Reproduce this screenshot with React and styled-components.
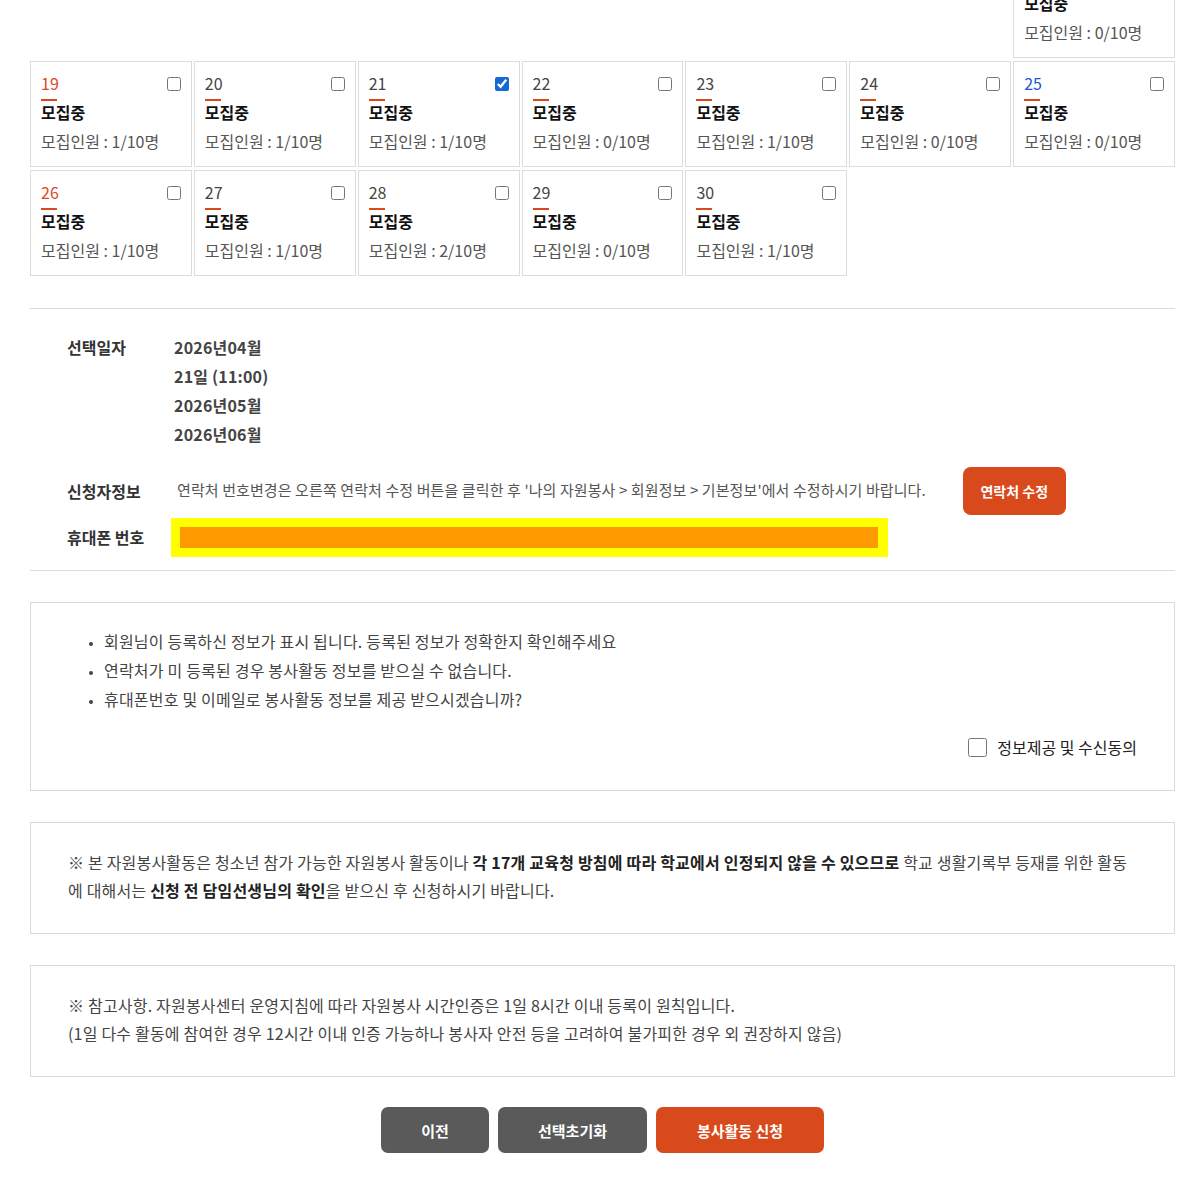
import styled, { createGlobalStyle } from "styled-components";

const GlobalStyle = createGlobalStyle`
  body {
    margin: 0;
    background: #fff;
    font-family: "Noto Sans CJK KR", "Noto Sans", sans-serif;
    color: #333;
  }
`;

const days = [
  null, null, null, null, null, null,
  { day: 18, count: 0, tone: "sat" },
  { day: 19, count: 1, tone: "sun" },
  { day: 20, count: 1 },
  { day: 21, count: 1, checked: true },
  { day: 22, count: 0 },
  { day: 23, count: 1 },
  { day: 24, count: 0 },
  { day: 25, count: 0, tone: "sat" },
  { day: 26, count: 1, tone: "sun" },
  { day: 27, count: 1 },
  { day: 28, count: 2 },
  { day: 29, count: 0 },
  { day: 30, count: 1 },
  null, null,
];

const App = () => {
  return (
    <Page>
      <GlobalStyle />
      <Calendar>
        {days.map((d, i) =>
          d ? (
            <Cell key={i}>
              <CellHead>
                <DayNum $tone={d.tone}>{d.day}</DayNum>
                <CellCheck type="checkbox" defaultChecked={!!d.checked} />
              </CellHead>
              <Bar />
              <Status>모집중</Status>
              <Count>모집인원 : {d.count}/10명</Count>
            </Cell>
          ) : (
            <Blank key={i} />
          )
        )}
      </Calendar>

      <Divider />

      <InfoSection>
        <InfoRow>
          <Label>선택일자</Label>
          <Dates>
            <div>2026년04월</div>
            <div>21일 (11:00)</div>
            <div>2026년05월</div>
            <div>2026년06월</div>
          </Dates>
        </InfoRow>
        <InfoRow $center $top={18}>
          <Label>신청자정보</Label>
          <Guide>
            연락처 번호변경은 오른쪽 연락처 수정 버튼을 클릭한 후 '나의 자원봉사 &gt; 회원정보 &gt; 기본정보'에서 수정하시기 바랍니다.
          </Guide>
          <EditButton>연락처 수정</EditButton>
        </InfoRow>
        <InfoRow $center $top={3}>
          <Label>휴대폰 번호</Label>
          <PhoneField />
        </InfoRow>
      </InfoSection>

      <Divider $top={13} />

      <NoticeBox $pad="24px 37px 32px">
        <BulletList>
          <li>회원님이 등록하신 정보가 표시 됩니다. 등록된 정보가 정확한지 확인해주세요</li>
          <li>연락처가 미 등록된 경우 봉사활동 정보를 받으실 수 없습니다.</li>
          <li>휴대폰번호 및 이메일로 봉사활동 정보를 제공 받으시겠습니까?</li>
        </BulletList>
        <AgreeRow>
          <AgreeCheck type="checkbox" />
          정보제공 및 수신동의
        </AgreeRow>
      </NoticeBox>

      <NoticeBox>
        <NoticeText>
          ※ 본 자원봉사활동은 청소년 참가 가능한 자원봉사 활동이나 <b>각 17개 교육청 방침에 따라 학교에서 인정되지 않을 수 있으므로</b> 학교 생활기록부 등재를 위한 활동에 대해서는 <b>신청 전 담임선생님의 확인</b>을 받으신 후 신청하시기 바랍니다.
        </NoticeText>
      </NoticeBox>

      <NoticeBox>
        <NoticeText>
          ※ 참고사항. 자원봉사센터 운영지침에 따라 자원봉사 시간인증은 1일 8시간 이내 등록이 원칙입니다.
          <br />
          (1일 다수 활동에 참여한 경우 12시간 이내 인증 가능하나 봉사자 안전 등을 고려하여 불가피한 경우 외 권장하지 않음)
        </NoticeText>
      </NoticeBox>

      <ButtonBar>
        <ActionButton $w={108}>이전</ActionButton>
        <ActionButton $w={149}>선택초기화</ActionButton>
        <ActionButton $w={168} $primary>봉사활동 신청</ActionButton>
      </ButtonBar>
    </Page>
  );
};

const Page = styled.div`
  width: 1145px;
  margin-left: 30px;
  padding-bottom: 40px;
`;

const Calendar = styled.div`
  display: grid;
  grid-template-columns: repeat(7, 1fr);
  grid-auto-rows: 106px;
  column-gap: 2px;
  row-gap: 3px;
  margin-top: -48px;
`;

const Cell = styled.div`
  border: 1px solid #dcdcdc;
  padding: 10px 10px 0 10px;
  display: flex;
  flex-direction: column;
  align-items: flex-start;
`;

const Blank = styled.div``;

const CellHead = styled.div`
  width: 100%;
  display: flex;
  justify-content: space-between;
  align-items: center;
  height: 22px;
`;

const DayNum = styled.span`
  font-size: 16px;
  line-height: 22px;
  color: ${(p) =>
    p.$tone === "sun" ? "#e0461c" : p.$tone === "sat" ? "#1a56d6" : "#444"};
`;

const CellCheck = styled.input`
  width: 14px;
  height: 14px;
  margin: 2px 0 0 0;
  accent-color: #1668d4;
`;

const Bar = styled.div`
  width: 16px;
  height: 2px;
  margin-top: 5px;
  background: #d84a1b;
`;

const Status = styled.div`
  font-size: 16px;
  font-weight: 700;
  line-height: 22px;
  color: #111;
`;

const Count = styled.div`
  margin-top: 7px;
  font-size: 16px;
  line-height: 22px;
  color: #555;
`;

const Divider = styled.hr`
  border: 0;
  border-top: 1px solid #dcdcdc;
  margin: ${(p) => (p.$top ?? 32)}px 0 0 0;
`;

const InfoSection = styled.div`
  padding: 24px 0 0 37px;
`;

const InfoRow = styled.div`
  display: flex;
  align-items: ${(p) => (p.$center ? "center" : "flex-start")};
  margin-top: ${(p) => p.$top ?? 0}px;
`;

const Label = styled.div`
  width: 107px;
  flex-shrink: 0;
  font-size: 16px;
  font-weight: 700;
  line-height: 29px;
  color: #333;
`;

const Dates = styled.div`
  font-size: 16px;
  font-weight: 700;
  line-height: 29px;
  letter-spacing: 0.2px;
  color: #444;
`;

const Guide = styled.div`
  margin: -3px 0 0 3px;
  font-size: 15px;
  letter-spacing: 0.1px;
  color: #555;
  white-space: nowrap;
`;

const EditButton = styled.button`
  margin-left: 37px;
  width: 103px;
  height: 48px;
  border: 0;
  border-radius: 8px;
  background: #d84a1b;
  color: #fff;
  font-family: inherit;
  font-size: 14px;
  font-weight: 700;
`;

const PhoneField = styled.div`
  margin-left: -3px;
  width: 698px;
  height: 21px;
  border: 9px solid #ffff00;
  border-right-width: 10px;
  background: #ff9900;
`;

const NoticeBox = styled.div`
  margin-top: 31px;
  border: 1px solid #d9d9d9;
  padding: ${(p) => p.$pad ?? "25px 37px 29px"};
`;

const BulletList = styled.ul`
  margin: 0;
  padding-left: 36px;
  font-size: 16px;
  line-height: 29px;
  letter-spacing: 0.2px;
  color: #444;

  li::marker {
    font-size: 11px;
  }
`;

const AgreeRow = styled.label`
  margin-top: 22px;
  display: flex;
  justify-content: flex-end;
  align-items: center;
  gap: 10px;
  font-size: 16px;
  line-height: 22px;
  color: #222;
`;

const AgreeCheck = styled.input`
  width: 19px;
  height: 19px;
  margin: 0;
`;

const NoticeText = styled.p`
  margin: 0;
  font-size: 16px;
  line-height: 28px;
  letter-spacing: 0.2px;
  color: #444;

  b {
    color: #222;
  }
`;

const ButtonBar = styled.div`
  margin-top: 30px;
  display: flex;
  justify-content: center;
  gap: 9px;
`;

const ActionButton = styled.button`
  width: ${(p) => p.$w}px;
  height: 46px;
  border: 0;
  border-radius: 7px;
  background: ${(p) => (p.$primary ? "#d84a1b" : "#5a5a5a")};
  color: #fff;
  font-family: inherit;
  font-size: 15px;
  font-weight: 700;
`;

export default App;
